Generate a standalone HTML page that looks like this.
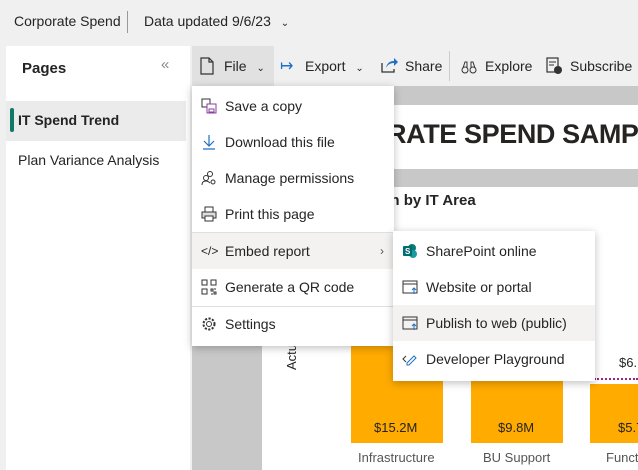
<!DOCTYPE html><html><head><style>
*{margin:0;padding:0;box-sizing:border-box}
html,body{width:638px;height:470px;overflow:hidden}
body{background:#f0f0f0;font-family:"Liberation Sans",sans-serif;color:#252423;position:relative;font-size:14px}
#w{position:absolute;left:0;top:0;width:638px;height:470px;overflow:hidden}
.a{position:absolute;white-space:nowrap}
.menu{position:absolute;background:#fff;box-shadow:0 2px 8px rgba(0,0,0,.25);}
.it{position:absolute;left:0;right:0;height:36px;line-height:36px;padding-left:33px;font-size:14px}
.ic{position:absolute;left:9px;top:10px;width:16px;height:16px}
.sep{position:absolute;left:0;right:0;height:1px;background:#e1dfdd}
</style></head><body><div id="w">
<div class="a" style="left:14px;top:13px;font-size:14px">Corporate Spend</div>
<div class="a" style="left:127px;top:11px;width:1px;height:22px;background:#999"></div>
<div class="a" style="left:144px;top:13px;font-size:14px">Data updated 9/6/23 <span style="font-size:10px;margin-left:6px">&#8964;</span></div>
<div class="a" style="left:6px;top:46px;width:184px;height:424px;background:#fff"></div>
<div class="a" style="left:22px;top:60px;font-size:15px;font-weight:600">Pages</div>
<div class="a" style="left:161px;top:56px;font-size:15px;color:#888">«</div>
<div class="a" style="left:6px;top:101px;width:180px;height:40px;background:#ebebeb"></div>
<div class="a" style="left:10px;top:108px;width:4px;height:24px;border-radius:2px;background:#117865"></div>
<div class="a" style="left:18px;top:112px;font-weight:600;font-size:14px">IT Spend Trend</div>
<div class="a" style="left:18px;top:152px;font-size:14px">Plan Variance Analysis</div>
<div class="a" style="left:192px;top:46px;width:446px;height:40px;background:#f0f0f0"></div>
<div class="a" style="left:192px;top:46px;width:82px;height:40px;background:#e1e1e1"></div>
<svg class="a" style="left:200px;top:57px" width="14" height="18" viewBox="0 0 14 18"><path d="M1 1h8l4 4v12H1z M9 1v4h4" fill="none" stroke="#333" stroke-width="1.2"/></svg>
<div class="a" style="left:224px;top:58px">File <span style="font-size:10px;margin-left:6px">&#8964;</span></div>
<div class="a" style="left:280px;top:56px;color:#1f6fc5;font-size:16px">&#8614;</div>
<div class="a" style="left:305px;top:58px">Export <span style="font-size:10px;margin-left:6px">&#8964;</span></div>
<svg class="a" style="left:380px;top:56px" width="18" height="18" viewBox="0 0 18 18"><path d="M2 7v9h12v-3" fill="none" stroke="#333" stroke-width="1.3"/><path d="M6 12c1-5 4-7 8-7V2l4 4-4 4V7c-3 0-6 1-8 5z" fill="#1f6fc5"/></svg>
<div class="a" style="left:405px;top:58px">Share</div>
<div class="a" style="left:449px;top:51px;width:1px;height:30px;background:#ccc"></div>
<svg class="a" style="left:461px;top:60px" width="16" height="14" viewBox="0 0 16 14"><circle cx="4" cy="10" r="3" fill="none" stroke="#333"/><circle cx="12" cy="10" r="3" fill="none" stroke="#333"/><path d="M2 8l2-6h2v6M14 8l-2-6h-2v6" fill="none" stroke="#333"/></svg>
<div class="a" style="left:485px;top:58px">Explore</div>
<svg class="a" style="left:545px;top:57px" width="18" height="18" viewBox="0 0 18 18"><rect x="2" y="1" width="11" height="14" fill="none" stroke="#333" stroke-width="1.2"/><path d="M4 5h7M4 8h5" stroke="#333"/><circle cx="13" cy="13" r="4" fill="#333"/></svg>
<div class="a" style="left:570px;top:58px">Subscribe</div>
<div class="a" style="left:192px;top:86px;width:446px;height:384px;background:#c8c8c8"></div>
<div class="a" style="left:262px;top:105px;width:376px;height:64px;background:#fff"></div>
<div class="a" style="left:290px;top:119px;font-size:27px;font-weight:700;color:#252423;letter-spacing:-0.4px">CORPORATE SPEND SAMPLE</div>
<div class="a" style="left:262px;top:187px;width:376px;height:283px;background:#fff"></div>
<div class="a" style="left:297px;top:192px;font-size:15px;font-weight:700">Actual vs Plan by IT Area</div>
<div class="a" style="left:284px;top:370px;font-size:13px;transform:rotate(-90deg);transform-origin:left top">Actual</div>
<div class="a" style="left:351px;top:330px;width:92px;height:113px;background:#ffab00"></div>
<div class="a" style="left:471px;top:330px;width:92px;height:113px;background:#ffab00"></div>
<div class="a" style="left:590px;top:384px;width:48px;height:59px;background:#ffab00"></div>
<div class="a" style="left:594px;top:378px;width:44px;border-top:2px dotted #a0227d"></div>
<div class="a" style="left:619px;top:355px;font-size:13px">$6.1M</div>
<div class="a" style="left:374px;top:420px;font-size:13px">$15.2M</div>
<div class="a" style="left:498px;top:420px;font-size:13px">$9.8M</div>
<div class="a" style="left:618px;top:420px;font-size:13px">$5.7M</div>
<div class="a" style="left:358px;top:450px;font-size:13px;color:#555">Infrastructure</div>
<div class="a" style="left:483px;top:450px;font-size:13px;color:#555">BU Support</div>
<div class="a" style="left:606px;top:450px;font-size:13px;color:#555">Functional</div>
<div class="menu" style="left:192px;top:86px;width:202px;height:260px">
<div class="it" style="top:2px"><svg class="ic" viewBox="0 0 16 16"><rect x="1" y="1" width="8" height="8" fill="none" stroke="#333"/><rect x="6" y="6" width="9" height="9" fill="#fff" stroke="#8a3fa0"/><rect x="8" y="11" width="5" height="3" fill="none" stroke="#8a3fa0"/></svg>Save a copy</div>
<div class="it" style="top:38px"><svg class="ic" viewBox="0 0 16 16"><path d="M8 1v11M3 7l5 5 5-5M2 15h12" fill="none" stroke="#1f6fc5" stroke-width="1.2"/></svg>Download this file</div>
<div class="it" style="top:74px"><svg class="ic" viewBox="0 0 16 16"><circle cx="9" cy="4" r="2.5" fill="none" stroke="#333"/><circle cx="5" cy="8" r="2.5" fill="none" stroke="#333"/><path d="M1 15c0-3 2-4 4-4s3 1 4 2" fill="none" stroke="#333"/><circle cx="12" cy="12" r="2" fill="none" stroke="#333"/></svg>Manage permissions</div>
<div class="it" style="top:110px"><svg class="ic" viewBox="0 0 16 16"><rect x="4" y="1" width="8" height="5" fill="none" stroke="#333"/><rect x="1" y="6" width="14" height="6" fill="#ddd" stroke="#333"/><rect x="4" y="10" width="8" height="5" fill="#fff" stroke="#333"/></svg>Print this page</div>
<div class="sep" style="top:146px"></div>
<div class="it" style="top:147px;background:#f3f2f1;font-size:14px"><span class="a" style="left:9px;font-size:12px">&lt;/&gt;</span>Embed report<span class="a" style="right:10px;font-size:12px;color:#555">&#8250;</span></div>
<div class="it" style="top:183px"><svg class="ic" viewBox="0 0 16 16"><rect x="1" y="1" width="5" height="5" fill="none" stroke="#333"/><rect x="10" y="1" width="5" height="5" fill="none" stroke="#333"/><rect x="1" y="10" width="5" height="5" fill="none" stroke="#333"/><path d="M10 10h2v2h-2zM13 13h2v2h-2zM13 10h2M10 15h2" stroke="#333" fill="none"/></svg>Generate a QR code</div>
<div class="sep" style="top:220px"></div>
<div class="it" style="top:220px"><svg class="ic" viewBox="0 0 16 16"><circle cx="8" cy="8" r="2.5" fill="none" stroke="#333"/><circle cx="8" cy="8" r="5.5" fill="none" stroke="#333" stroke-dasharray="2.2 1.4" stroke-width="2"/></svg>Settings</div>
</div>
<div class="menu" style="left:393px;top:231px;width:202px;height:150px">
<div class="it" style="top:2px"><svg class="ic" viewBox="0 0 16 16"><circle cx="10" cy="5" r="4" fill="#0b7a75"/><circle cx="11" cy="11" r="4" fill="#1a9ba1"/><rect x="1" y="3" width="9" height="10" rx="1" fill="#036c70"/><text x="3" y="11" font-size="8" fill="#fff" font-family="Liberation Sans" font-weight="bold">S</text></svg>SharePoint online</div>
<div class="it" style="top:38px"><svg class="ic" viewBox="0 0 16 16"><rect x="1" y="2" width="14" height="12" fill="none" stroke="#333"/><path d="M1 5h14" stroke="#333"/><path d="M12 15V9M10 11l2-2 2 2" stroke="#1f6fc5" fill="none"/></svg>Website or portal</div>
<div class="it" style="top:74px;background:#f3f2f1"><svg class="ic" viewBox="0 0 16 16"><rect x="1" y="2" width="14" height="12" fill="none" stroke="#333"/><path d="M1 5h14" stroke="#333"/><path d="M12 15V9M10 11l2-2 2 2" stroke="#1f6fc5" fill="none"/></svg>Publish to web (public)</div>
<div class="it" style="top:110px"><svg class="ic" viewBox="0 0 16 16"><path d="M4 5L1 8l3 3" stroke="#333" fill="none"/><path d="M5 12l7-7 2 2-7 7H5z" fill="none" stroke="#1f6fc5"/></svg>Developer Playground</div>
</div>
</div></body></html>
